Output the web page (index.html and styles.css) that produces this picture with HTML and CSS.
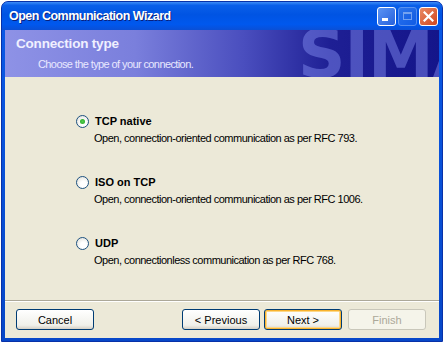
FILE: index.html
```html
<!DOCTYPE html>
<html>
<head>
<meta charset="utf-8">
<link rel="stylesheet" href="styles.css">
</head>
<body>
<div class="window">
  <div class="titlebar">
    <span class="title">Open Communication Wizard</span>
    <div class="winbtns">
      <div class="wbtn min"><span class="minbar"></span></div>
      <div class="wbtn max dis"><span class="maxbox"></span></div>
      <div class="wbtn close">
        <svg width="11" height="11" viewBox="0 0 11 11"><path d="M1.5 1.5 L9.5 9.5 M9.5 1.5 L1.5 9.5" stroke="#fff" stroke-width="2.2" stroke-linecap="square"/></svg>
      </div>
    </div>
  </div>
  <div class="client">
    <div class="banner">
      <div class="watermark">SIMATIC</div>
      <div class="bh">Connection type</div>
      <div class="bs">Choose the type of your connection.</div>
    </div>
    <div class="options">
      <div class="opt">
        <div class="optline"><span class="radio checked"><span class="dot"></span></span><span class="olabel">TCP native</span></div>
        <div class="odesc">Open, connection-oriented communication as per RFC 793.</div>
      </div>
      <div class="opt">
        <div class="optline"><span class="radio"></span><span class="olabel">ISO on TCP</span></div>
        <div class="odesc">Open, connection-oriented communication as per RFC 1006.</div>
      </div>
      <div class="opt">
        <div class="optline"><span class="radio"></span><span class="olabel">UDP</span></div>
        <div class="odesc">Open, connectionless communication as per RFC 768.</div>
      </div>
    </div>
    <div class="footer">
      <button class="btn">Cancel</button>
      <div class="spacer"></div>
      <button class="btn">&lt; Previous</button>
      <button class="btn default">Next &gt;</button>
      <button class="btn disabled">Finish</button>
    </div>
  </div>
</div>
</body>
</html>
```
FILE: styles.css
```css
html, body { margin: 0; padding: 0; background: #fff; }
body { width: 444px; height: 343px; overflow: hidden; font-family: "Liberation Sans", Arial, sans-serif; }
.window {
  width: 442px; height: 341px; margin: 1px 1px 0 1px; box-sizing: border-box;
  display: flex; flex-direction: column;
  background: linear-gradient(#0a5ae8, #0747c8);
  border-radius: 7px 7px 0 0;
  padding: 0 3px 3px 3px;
  border: 1px solid #0831a8;
}
.titlebar {
  height: 28px; display: flex; align-items: center;
  margin: 0 -3px; padding-left: 7px; padding-right: 4px;
  background: linear-gradient(#3d8cf7 0%, #0a5fe9 12%, #0054e3 45%, #0058ee 80%, #0a4fd6 100%);
  border-radius: 6px 6px 0 0;
}
.title { color: #fff; font-weight: bold; font-size: 12.5px; font-family: "Liberation Sans", Arial, sans-serif; letter-spacing: -0.5px; text-shadow: 1px 1px 0 #0a1f7a; flex: 1; }
.winbtns { display: flex; gap: 2px; }
.wbtn { width: 19px; height: 19px; border: 1px solid #fff; border-radius: 3px; box-sizing: border-box; display: flex; align-items: center; justify-content: center; background: linear-gradient(135deg, #5c94f4, #2661dc); }
.wbtn.dis { opacity: 0.45; border-color: #bcd2f8; }
.minbar { width: 6px; height: 3px; background: #fff; margin-top: 7px; margin-right: 3px; }
.maxbox { width: 9px; height: 8px; border: 1px solid #fff; border-top-width: 2px; box-sizing: border-box; }
.wbtn.close { background: linear-gradient(135deg, #e98a64, #d2461e); }
.client { flex: 1; background: #ece9d8; display: flex; flex-direction: column; overflow: hidden; }
.banner {
  position: relative; height: 47px; overflow: hidden; flex: none;
  background: linear-gradient(90deg, #8e92e6 0%, #7a7fdc 30%, #4a4ebe 55%, #1e1f94 75%, #14158a 100%);
  padding-left: 11px; box-sizing: border-box;
}
.watermark { position: absolute; left: 293px; top: -14px; font-family: "DejaVu Sans", sans-serif; font-weight: bold; font-size: 66px; color: rgba(125,135,235,0.5); letter-spacing: -1px; white-space: nowrap; }
.bh { position: relative; color: #f0f0ff; font-weight: bold; font-size: 13.5px; padding-top: 6px; letter-spacing: -0.2px; }
.bs { position: relative; color: #e8e8ff; font-size: 11px; letter-spacing: -0.6px; padding-left: 22px; margin-top: 7px; }
.options { flex: 1; padding: 36px 0 0 71px; display: flex; flex-direction: column; gap: 30px; }
.optline { display: flex; align-items: center; height: 16px; }
.radio { width: 13px; height: 13px; border-radius: 50%; border: 1px solid #1c5180; box-sizing: border-box; background: radial-gradient(circle at 60% 65%, #fff 30%, #dcdcd4 100%); display: flex; align-items: center; justify-content: center; margin-right: 6px; }
.dot { width: 5px; height: 5px; border-radius: 50%; background: radial-gradient(circle, #55d050, #21a121); }
.olabel { font-weight: bold; font-size: 11px; color: #000; }
.odesc { font-size: 11px; letter-spacing: -0.5px; color: #000; padding-left: 18px; margin-top: 3px; }
.footer { height: 38px; flex: none; border-top: 1px solid #aca899; box-shadow: inset 0 1px 0 #fff; display: flex; align-items: center; padding: 0 13px 0 11px; gap: 4px; box-sizing: border-box; }
.spacer { flex: 1; }
.btn { width: 78px; height: 21px; border: 1px solid #003c74; border-radius: 3px; background: linear-gradient(#fff, #f0f0ea 80%, #d6d0c5); font-family: "Liberation Sans", Arial, sans-serif; font-size: 11px; color: #000; padding: 0; }
.btn.default { border-color: #003c74; box-shadow: inset 0 0 0 1px #f8b330, inset 0 0 0 2px #fdd889; }
.btn.disabled { border-color: #c9c7ba; background: #f5f4ea; color: #aca899; margin-left: 2px; }
```
